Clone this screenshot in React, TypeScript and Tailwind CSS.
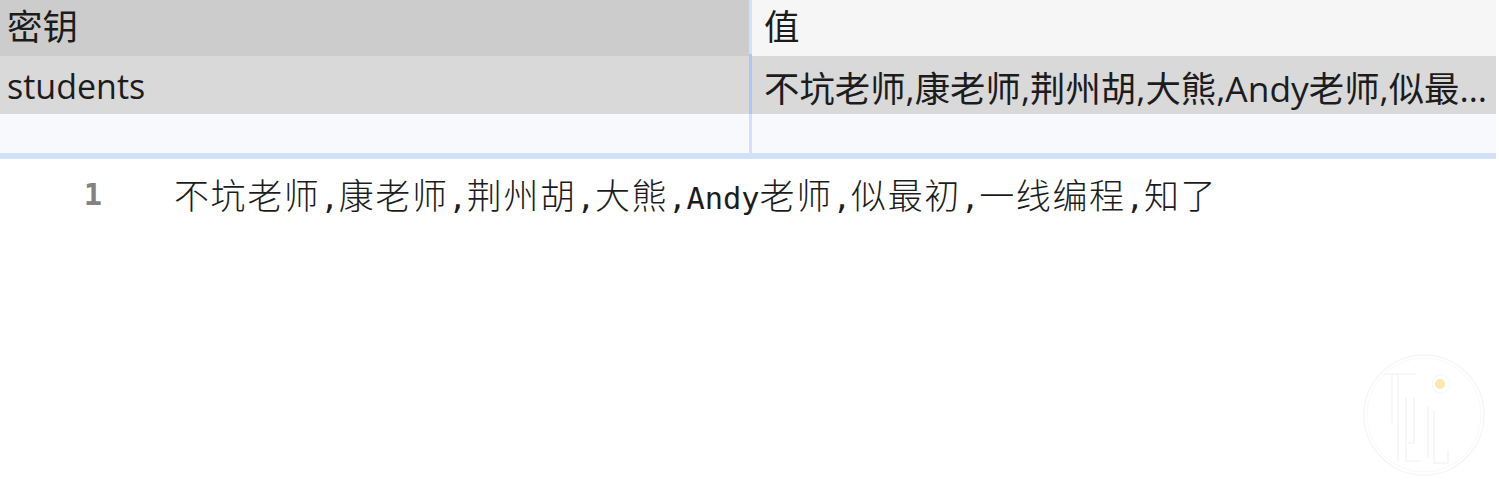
import React from "react";

const uiFont = {
  fontFamily: '"Open Sans", "Noto Sans CJK SC", sans-serif',
};

const rows = [{ key: "students", value: "不坑老师,康老师,荆州胡,大熊,Andy老师,似最初,一线编程,知了" }];

// split editor text into CJK / ascii runs so CJK glyphs take two mono cells
function splitRuns(text: string) {
  const runs: { cjk: boolean; text: string }[] = [];
  for (const ch of text) {
    const cjk = /[\u3000-\u9fff\uff00-\uffef]/.test(ch);
    const last = runs[runs.length - 1];
    if (last && last.cjk === cjk) last.text += ch;
    else runs.push({ cjk, text: ch });
  }
  return runs;
}

function Watermark() {
  return (
    <svg
      className="absolute left-[1362px] top-[353px]"
      width="126"
      height="126"
      viewBox="0 0 126 126"
      fill="none"
    >
      <circle cx="62" cy="62" r="60" stroke="#f6f6f6" strokeWidth="1.5" />
      <circle cx="62" cy="62" r="57" stroke="#f9f9f9" strokeWidth="1" />
      <path
        d="M22 21 H54 M30 21 V70 M36 21 V108 M44 45 V108 H58 M52 45 V90 H46 M66 54 V104 M72 58 V110 H86 M86 98 V110"
        stroke="#f5f5f5"
        strokeWidth="1.5"
        strokeLinecap="round"
      />
      <circle cx="79" cy="31" r="9" stroke="#f7f7f7" strokeWidth="1" />
      <circle cx="78" cy="31" r="5" fill="#fbe9ab" />
    </svg>
  );
}

export default function App() {
  return (
    <div className="relative h-[490px] w-[1499px] overflow-hidden bg-white text-[#1c1c1c]" style={uiFont}>
      {/* key / value table */}
      <div className="w-[1496px] text-[34px]">
        <div className="grid h-[51px] grid-cols-[749px_3px_744px] text-[35.5px]">
          <div className="flex items-center bg-[#cccccc] pb-[3px] pl-[7px]">密钥</div>
          <div className="bg-[#d3e1f8]" />
          <div className="flex items-center bg-[#f6f6f6] pb-[3px] pl-[12px]">值</div>
        </div>
        <div className="h-[3px] bg-[#d3e1f8]" />
        {rows.map((row) => (
          <div key={row.key} className="grid h-[60px] grid-cols-[749px_3px_744px] bg-[#d9d9d9]">
            <div className="flex items-center pl-[7px] pt-[4px]">{row.key}</div>
            <div className="bg-[#a9c8f2]" />
            <div className="min-w-0 truncate pl-[12px] pr-[6px] pt-[8px] text-[35.4px] leading-[52px]">
              {row.value}
            </div>
          </div>
        ))}
        <div className="grid h-[39px] grid-cols-[749px_3px_744px] bg-[#f8f9fc]">
          <div />
          <div className="bg-[#d3e1f8]" />
          <div />
        </div>
        <div className="h-[6px] bg-[#d3e1f8]" />
      </div>

      {/* editor */}
      <div className="flex h-[72px] items-center" style={{ fontFamily: '"DejaVu Sans Mono", "Noto Sans CJK SC", monospace' }}>
        <div className="w-[102px] text-right text-[30.4px] font-bold text-[#828282]">1</div>
        <div className="whitespace-pre pl-[72px] text-[30.4px] text-[#1c1c1c]">
          {splitRuns(rows[0].value).map((run, i) =>
            run.cjk ? (
              <span
                key={i}
                className="text-[35px] font-light tracking-[1.6px]"
                style={{ fontFamily: '"Noto Sans CJK SC", sans-serif' }}
              >
                {run.text}
              </span>
            ) : (
              <span key={i}>{run.text}</span>
            ),
          )}
        </div>
      </div>

      <Watermark />
    </div>
  );
}
